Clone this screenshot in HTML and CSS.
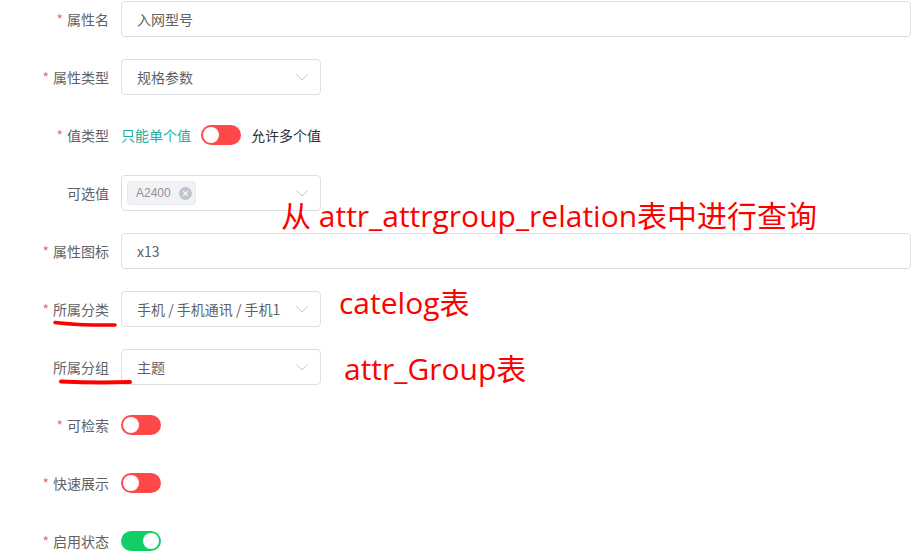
FILE: index.html
```html
<!DOCTYPE html>
<html lang="zh-CN">
<head>
<meta charset="utf-8">
<title>属性编辑</title>
<link rel="stylesheet" href="styles.css">
</head>
<body>
<div class="page">
  <form class="form">
    <div class="item">
      <label class="label"><span class="req">*</span>属性名</label>
      <div class="control"><div class="input">入网型号</div></div>
    </div>
    <div class="item">
      <label class="label"><span class="req">*</span>属性类型</label>
      <div class="control"><div class="input select">规格参数<svg class="arrow" viewBox="0 0 12 7" width="12" height="7"><path d="M0.5 0.5 L6 6 L11.5 0.5" fill="none" stroke="#c0c4cc" stroke-width="1"/></svg></div></div>
    </div>
    <div class="item">
      <label class="label"><span class="req">*</span>值类型</label>
      <div class="control row">
        <span class="sw-text active">只能单个值</span>
        <span class="switch off"><span class="knob"></span></span>
        <span class="sw-text">允许多个值</span>
      </div>
    </div>
    <div class="item">
      <label class="label">可选值</label>
      <div class="control"><div class="input select multi"><span class="tag">A2400<span class="tag-close"><svg viewBox="0 0 10 10" width="7" height="7"><path d="M1.5 1.5 L8.5 8.5 M8.5 1.5 L1.5 8.5" stroke="#fff" stroke-width="1.6" fill="none"/></svg></span></span><svg class="arrow" viewBox="0 0 12 7" width="12" height="7"><path d="M0.5 0.5 L6 6 L11.5 0.5" fill="none" stroke="#c0c4cc" stroke-width="1"/></svg></div></div>
    </div>
    <div class="item">
      <label class="label"><span class="req">*</span>属性图标</label>
      <div class="control"><div class="input">x13</div></div>
    </div>
    <div class="item">
      <label class="label"><span class="req">*</span>所属分类</label>
      <div class="control"><div class="input select">手机 / 手机通讯 / 手机1<svg class="arrow" viewBox="0 0 12 7" width="12" height="7"><path d="M0.5 0.5 L6 6 L11.5 0.5" fill="none" stroke="#c0c4cc" stroke-width="1"/></svg></div></div>
    </div>
    <div class="item">
      <label class="label">所属分组</label>
      <div class="control"><div class="input select">主题<svg class="arrow" viewBox="0 0 12 7" width="12" height="7"><path d="M0.5 0.5 L6 6 L11.5 0.5" fill="none" stroke="#c0c4cc" stroke-width="1"/></svg></div></div>
    </div>
    <div class="item">
      <label class="label"><span class="req">*</span>可检索</label>
      <div class="control row"><span class="switch off"><span class="knob"></span></span></div>
    </div>
    <div class="item">
      <label class="label"><span class="req">*</span>快速展示</label>
      <div class="control row"><span class="switch off"><span class="knob"></span></span></div>
    </div>
    <div class="item">
      <label class="label"><span class="req">*</span>启用状态</label>
      <div class="control row"><span class="switch on"><span class="knob"></span></span></div>
    </div>
  </form>

  <div class="note note-1">从 attr_attrgroup_relation表中进行查询</div>
  <div class="note note-2">catelog表</div>
  <div class="note note-3">attr_Group表</div>

  <svg class="marks" width="913" height="559" viewBox="0 0 913 559">
    <path d="M55 322.5 Q80 325.5 115 325" fill="none" stroke="#ff0000" stroke-width="3.5" stroke-linecap="round"/>
    <path d="M61 381.5 Q95 383 130 382" fill="none" stroke="#ff0000" stroke-width="4" stroke-linecap="round"/>
  </svg>
</div>
</body>
</html>
```

FILE: styles.css
```css
html, body {
  margin: 0;
  padding: 0;
  background: #fff;
}

.page {
  position: relative;
  width: 913px;
  height: 559px;
  overflow: hidden;
  font-family: "Noto Sans CJK SC", "Liberation Sans", sans-serif;
}

.form {
  width: 911px;
  padding-top: 1px;
  display: flex;
  flex-direction: column;
  gap: 22px;
}

.item {
  display: flex;
  align-items: center;
  height: 36px;
}

.label {
  width: 121px;
  box-sizing: border-box;
  padding-right: 12px;
  text-align: right;
  font-size: 14px;
  color: #606266;
  line-height: 36px;
}

.req {
  color: #f56c6c;
  margin-right: 4px;
}

.control {
  flex: 1;
  height: 36px;
}

.control.row {
  display: flex;
  align-items: center;
}

.input {
  box-sizing: border-box;
  height: 36px;
  border: 1px solid #dcdfe6;
  border-radius: 4px;
  padding: 0 15px;
  font-size: 14px;
  color: #606266;
  display: flex;
  align-items: center;
  background: #fff;
}

.input.select {
  width: 200px;
  position: relative;
}

.input.multi {
  padding-left: 5px;
}

.arrow {
  position: absolute;
  right: 12px;
  top: 14px;
}

.tag {
  display: inline-flex;
  align-items: center;
  box-sizing: border-box;
  height: 24px;
  padding: 0 3px 0 8px;
  background: #f0f2f5;
  border: 1px solid #e9e9eb;
  border-radius: 4px;
  font-size: 12px;
  color: #909399;
  font-family: "Liberation Sans", sans-serif;
}

.tag-close {
  display: inline-flex;
  align-items: center;
  justify-content: center;
  width: 13px;
  height: 13px;
  margin-left: 8px;
  border-radius: 50%;
  background: #c0c4cc;
}

.switch {
  position: relative;
  display: inline-block;
  width: 40px;
  height: 20px;
  border-radius: 10px;
}

.switch.off { background: #ff4949; }
.switch.on { background: #13ce66; }

.knob {
  position: absolute;
  top: 2px;
  width: 16px;
  height: 16px;
  border-radius: 50%;
  background: #fff;
}

.switch.off .knob { left: 2px; }
.switch.on .knob { right: 2px; }

.sw-text {
  font-size: 14px;
  color: #303133;
}

.sw-text.active {
  color: #1ab09e;
  margin-right: 10px;
}

.switch + .sw-text {
  margin-left: 10px;
}

.note {
  position: absolute;
  color: #ff0000;
  font-size: 30px;
  line-height: 1;
  white-space: nowrap;
  font-family: "Open Sans", "Noto Sans CJK SC", sans-serif;
}

.note-1 { left: 281px; top: 201px; }
.note-2 { left: 339px; top: 288px; }
.note-3 { left: 344px; top: 354px; }

.marks {
  position: absolute;
  left: 0;
  top: 0;
  pointer-events: none;
}
```
